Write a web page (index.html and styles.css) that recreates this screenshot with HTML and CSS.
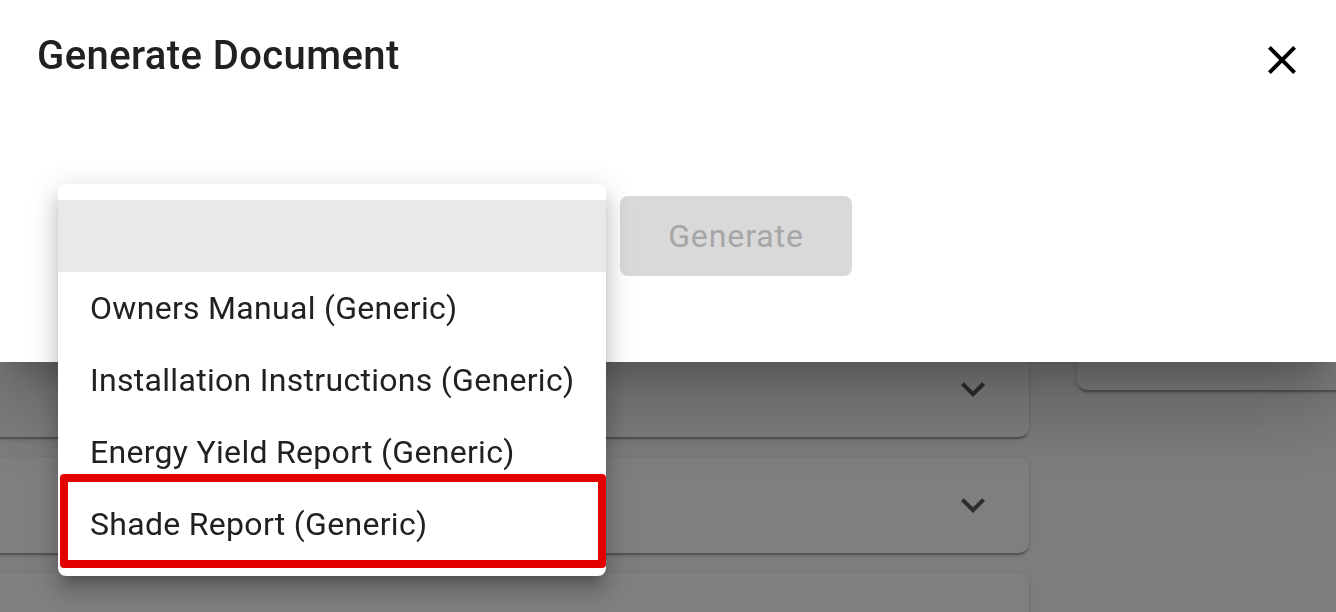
FILE: index.html
```html
<!DOCTYPE html>
<html lang="en">
<head>
<meta charset="utf-8">
<title>Generate Document</title>
<link rel="stylesheet" href="styles.css">
</head>
<body>
  <main class="page">
    <section class="col-left">
      <div class="card"><svg class="chev" viewBox="0 0 24 24"><path d="M16.59 8.59L12 13.17 7.41 8.59 6 10l6 6 6-6z"/></svg></div>
      <div class="card"><svg class="chev" viewBox="0 0 24 24"><path d="M16.59 8.59L12 13.17 7.41 8.59 6 10l6 6 6-6z"/></svg></div>
      <div class="card card-last"></div>
    </section>
    <aside class="col-right">
      <div class="card card-side"></div>
    </aside>
  </main>

  <div class="backdrop"></div>

  <div class="dialog" role="dialog">
    <header class="dialog-head">
      <h2 class="dialog-title">Generate Document</h2>
      <button class="close" aria-label="Close">
        <svg viewBox="0 0 24 24"><path d="M19 6.41L17.59 5 12 10.59 6.41 5 5 6.41 10.59 12 5 17.59 6.41 19 12 13.41 17.59 19 19 17.59 13.41 12z"/></svg>
      </button>
    </header>
    <div class="dialog-body">
      <div class="select-wrap">
        <div class="select"></div>
        <ul class="menu">
          <li class="item item-selected">&nbsp;</li>
          <li class="item">Owners Manual (Generic)</li>
          <li class="item">Installation Instructions (Generic)</li>
          <li class="item">Energy Yield Report (Generic)</li>
          <li class="item">Shade Report (Generic)</li>
          <li class="highlight" aria-hidden="true"></li>
        </ul>
      </div>
      <button class="generate" disabled>Generate</button>
    </div>
  </div>
</body>
</html>
```

FILE: styles.css
```css
* { box-sizing: border-box; }

html, body {
  margin: 0;
  height: 100%;
  overflow: hidden;
}

body {
  font-family: Roboto, "Liberation Sans", sans-serif;
  background: #fafafa;
  color: #212121;
}

/* background application */
.page {
  display: flex;
  align-items: flex-start;
  gap: 48px;
  padding-top: 341px;
  height: 100%;
  overflow: hidden;
}

.col-left {
  width: 1049px;
  margin-left: -20px;
  display: flex;
  flex-direction: column;
  gap: 20px;
}

.col-right {
  flex: 1;
  margin-right: -20px;
}

.card {
  background: #fff;
  border-radius: 10px;
  height: 96px;
  display: flex;
  align-items: center;
  justify-content: flex-end;
  padding-right: 32px;
  box-shadow: 0 4px 2px -2px rgba(0,0,0,0.2), 0 2px 2px 0 rgba(0,0,0,0.14), 0 2px 6px 0 rgba(0,0,0,0.12);
}

.card-last {
  height: 39px;
  border-radius: 10px 10px 0 0;
}

.card-side {
  height: 49px;
}

.chev {
  width: 48px;
  height: 48px;
  fill: #5a5a5a;
}

.backdrop {
  position: fixed;
  inset: 0;
  background: rgba(0,0,0,0.5);
}

/* dialog */
.dialog {
  position: fixed;
  top: 0;
  left: 0;
  right: 0;
  height: 362px;
  background: #fff;
  box-shadow: 0 22px 30px -14px rgba(0,0,0,0.2), 0 48px 76px 6px rgba(0,0,0,0.14), 0 18px 92px 16px rgba(0,0,0,0.12);
}

.dialog-head {
  display: flex;
  justify-content: space-between;
  align-items: flex-start;
  padding: 24px 30px 0 37px;
}

.dialog-title {
  margin: 0;
  font-size: 40px;
  font-weight: 500;
  line-height: 64px;
  letter-spacing: 0.4px;
  color: #212121;
}

.close {
  margin-top: 12px;
  width: 48px;
  height: 48px;
  padding: 0;
  border: 0;
  background: none;
  cursor: pointer;
}

.close svg {
  width: 48px;
  height: 48px;
  fill: #000;
  display: block;
}

.dialog-body {
  display: flex;
  align-items: flex-start;
  gap: 14px;
  padding: 108px 0 0 58px;
}

.select-wrap {
  position: relative;
  width: 548px;
}

.select {
  height: 80px;
}

.menu {
  position: absolute;
  top: -12px;
  left: 0;
  width: 548px;
  margin: 0;
  padding: 16px 0;
  list-style: none;
  background: #fff;
  border-radius: 8px;
  box-shadow: 0 10px 10px -6px rgba(0,0,0,0.2), 0 16px 20px 2px rgba(0,0,0,0.14), 0 6px 28px 4px rgba(0,0,0,0.12);
}

.item {
  height: 72px;
  display: flex;
  align-items: center;
  padding: 0 32px;
  font-size: 32px;
  letter-spacing: 0.3px;
  color: #212121;
  white-space: nowrap;
}

.item-selected {
  background: #e9e9e9;
}

.highlight {
  position: absolute;
  left: 2px;
  top: 290px;
  width: 546px;
  height: 94px;
  border: 8px solid #e30000;
  border-radius: 4px;
}

.generate {
  width: 232px;
  height: 80px;
  border: 0;
  border-radius: 8px;
  background: #d9d9d9;
  color: #a6a6a6;
  font-family: Roboto, "Liberation Sans", sans-serif;
  font-size: 32px;
  font-weight: 400;
  letter-spacing: 0.9px;
}
```
